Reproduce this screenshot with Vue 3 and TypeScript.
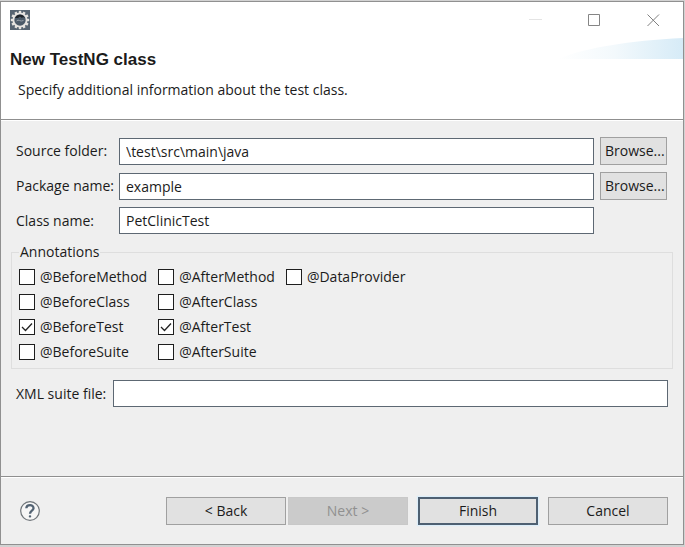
<script setup lang="ts">
import { reactive, ref } from 'vue'

interface Annotation {
  id: string
  label: string
  checked: boolean
}

const sourceFolder = ref('\\test\\src\\main\\java')
const packageName = ref('example')
const className = ref('PetClinicTest')
const suiteFile = ref('')

const columns = reactive<Annotation[][]>([
  [
    { id: 'before-method', label: '@BeforeMethod', checked: false },
    { id: 'before-class', label: '@BeforeClass', checked: false },
    { id: 'before-test', label: '@BeforeTest', checked: true },
    { id: 'before-suite', label: '@BeforeSuite', checked: false },
  ],
  [
    { id: 'after-method', label: '@AfterMethod', checked: false },
    { id: 'after-class', label: '@AfterClass', checked: false },
    { id: 'after-test', label: '@AfterTest', checked: true },
    { id: 'after-suite', label: '@AfterSuite', checked: false },
  ],
  [{ id: 'data-provider', label: '@DataProvider', checked: false }],
])

const gearAngles: number[] = [0, 30, 60, 90, 120, 150, 180, 210, 240, 270, 300, 330]
</script>

<template>
  <main class="dialog">
    <header class="banner">
      <svg class="swoosh" viewBox="0 0 125 22" aria-hidden="true">
        <defs>
          <linearGradient id="swoosh-fill" x1="0" y1="0" x2="1" y2="0">
            <stop offset="0" stop-color="#ffffff" />
            <stop offset="0.45" stop-color="#f3f9fc" />
            <stop offset="1" stop-color="#d6ebf7" />
          </linearGradient>
        </defs>
        <path d="M0 21C30 9 70 3 125 0V21Z" fill="url(#swoosh-fill)" />
      </svg>
      <div class="titlebar">
        <svg class="app-icon" viewBox="0 0 20 20" aria-hidden="true">
          <rect width="20" height="20" fill="#566471" />
          <rect
            v-for="angle in gearAngles"
            :key="angle"
            x="8.8"
            y="0.8"
            width="2.4"
            height="4"
            fill="#e6e4e0"
            :transform="`rotate(${angle} 10 10)`"
          />
          <circle cx="10" cy="10" r="7.6" fill="#e6e4e0" />
          <circle cx="10" cy="10" r="5.7" fill="#4b5a68" />
          <path d="M5 8A5.4 5.4 0 0 1 15 8L13 7L12 8L10 6.500L8 8Z" fill="#1d2329" />
          <path d="M6.500 11Q8 9.500 9.500 10.500T13.500 10.500" fill="none" stroke="#97a0a8" />
        </svg>
        <div class="window-controls">
          <button type="button" aria-label="Minimize">
            <svg viewBox="0 0 13 13"><path d="M0 5.5H13" stroke="#e4e4e4" /></svg>
          </button>
          <button type="button" aria-label="Maximize">
            <svg viewBox="0 0 13 13"><path d="M0.5 0.5H11.5V11.5H0.5Z" stroke="#858585" /></svg>
          </button>
          <button type="button" aria-label="Close">
            <svg viewBox="0 0 13 13"><path d="M0.500 0.500L12 12M12 0.500L0.500 12" stroke="#808080" /></svg>
          </button>
        </div>
      </div>
      <h1>New TestNG class</h1>
      <p>Specify additional information about the test class.</p>
    </header>

    <form class="content" @submit.prevent>
      <div class="fields">
        <div class="field">
          <label for="source">Source folder:</label>
          <input id="source" v-model="sourceFolder" type="text" />
          <button type="button" class="button">Browse...</button>
        </div>
        <div class="field">
          <label for="package">Package name:</label>
          <input id="package" v-model="packageName" type="text" />
          <button type="button" class="button">Browse...</button>
        </div>
        <div class="field">
          <label for="class">Class name:</label>
          <input id="class" v-model="className" type="text" />
        </div>
      </div>

      <fieldset>
        <legend>Annotations</legend>
        <div class="columns">
          <div v-for="(column, index) in columns" :key="index" class="column">
            <label v-for="item in column" :key="item.id" class="check" :for="item.id">
              <span class="box">
                <input :id="item.id" v-model="item.checked" type="checkbox" />
                <svg v-if="item.checked" viewBox="0 0 16 16" aria-hidden="true">
                  <path d="M3 8L6.500 11.500L13 4.500" />
                </svg>
              </span>
              {{ item.label }}
            </label>
          </div>
        </div>
      </fieldset>

      <div class="suite">
        <label for="suite">XML suite file:</label>
        <input id="suite" v-model="suiteFile" type="text" />
      </div>
    </form>

    <footer>
      <button type="button" class="help" aria-label="Help">
        <svg viewBox="0 0 20 20">
          <circle cx="10" cy="10" r="9.3" fill="#f6f6f6" stroke="#6e7479" stroke-width="1.2" />
          <path
            d="M6.300 7.300C6.500 3 13.600 3 13.500 7.200C13.400 9.600 10 9.700 10 12.700"
            fill="none"
            stroke="#536373"
            stroke-width="2.3"
          />
          <rect x="8.800" y="14.200" width="2.400" height="2.400" rx="1" fill="#536373" />
        </svg>
      </button>
      <div class="actions">
        <div class="steps">
          <button type="button" class="button">&lt; Back</button>
          <button type="button" class="button" disabled>Next &gt;</button>
        </div>
        <button type="button" class="button primary">Finish</button>
        <button type="button" class="button">Cancel</button>
      </div>
    </footer>
  </main>
</template>

<style>
body {
  margin: 0;
  background: #d2d2d2;
}
</style>

<style scoped>
* {
  box-sizing: border-box;
}

.dialog {
  display: flex;
  flex-direction: column;
  min-height: calc(100vh - 3px);
  margin: 1px 1px 2px 0;
  border: 1px solid #909090;
  background: #efefef;
  color: #1b1b1b;
  font-family: "Open Sans", "Noto Sans", sans-serif;
  font-size: 14px;
  line-height: 20px;
}

.banner {
  position: relative;
  height: 118px;
  border-bottom: 1px solid #8f8f8f;
  background: #fff;
}

.swoosh {
  position: absolute;
  top: 36px;
  right: 0;
  width: 125px;
  height: 22px;
}

.titlebar {
  display: flex;
  align-items: center;
  justify-content: space-between;
  height: 36px;
  padding-left: 9px;
}

.app-icon {
  width: 20px;
  height: 20px;
}

.window-controls {
  display: flex;
}

.window-controls button {
  display: grid;
  place-items: center;
  width: 59px;
  height: 36px;
  padding: 0;
  border: 0;
  background: none;
}

.window-controls svg {
  width: 13px;
  height: 13px;
  fill: none;
}

h1 {
  margin: 12px 9px 0;
  font-family: "Liberation Sans", Arial, sans-serif;
  font-size: 17px;
  font-weight: 700;
  line-height: 20px;
}

p {
  margin: 10px 17px 0;
}

.content {
  flex: 1;
  padding: 16px 10px 0;
  border-top: 1px solid #fff;
}

.fields {
  display: flex;
  flex-direction: column;
  gap: 7px;
  padding: 0 6px 0 5px;
}

.field {
  display: grid;
  grid-template-columns: 97px 1fr 67px;
  align-items: center;
  column-gap: 6px;
}

input[type="text"] {
  width: 100%;
  min-width: 0;
  height: 27px;
  padding: 0 6px;
  border: 1px solid #5d6873;
  border-radius: 0;
  background: #fff;
  color: inherit;
  font: inherit;
}

label {
  white-space: nowrap;
}

.button {
  height: 28px;
  padding: 0 4px;
  border: 1px solid #a0a0a0;
  border-radius: 0;
  background: #e1e1e1;
  color: inherit;
  font: inherit;
}

fieldset {
  margin: 8px 0 0;
  padding: 0 7px 6px;
  border: 1px solid #dedede;
}

legend {
  padding: 0 1px;
}

.columns {
  display: flex;
  gap: 11px;
  padding-top: 5px;
}

.column {
  display: flex;
  flex-direction: column;
  gap: 5px;
}

.check {
  display: flex;
  align-items: center;
  gap: 5px;
}

.box {
  display: grid;
  width: 16px;
  height: 16px;
}

.box > * {
  grid-area: 1 / 1;
}

.box input {
  appearance: none;
  width: 16px;
  height: 16px;
  margin: 0;
  border: 1px solid #1e1e1e;
  background: #fff;
}

.box svg {
  fill: none;
  stroke: #222;
  stroke-width: 1.3px;
  pointer-events: none;
}

.suite {
  display: grid;
  grid-template-columns: 93px 1fr;
  align-items: center;
  column-gap: 4px;
  padding: 11px 5px 0;
}

footer {
  display: flex;
  align-items: center;
  justify-content: space-between;
  height: 68px;
  padding: 0 15px 0 19px;
  border-top: 1px solid #8f8f8f;
  box-shadow: inset 0 1px #fff;
}

.help {
  width: 20px;
  height: 20px;
  padding: 0;
  border: 0;
  background: none;
}

.help svg {
  display: block;
}

.actions {
  display: flex;
  gap: 10px;
}

.steps {
  display: flex;
  gap: 2px;
}

.actions .button {
  width: 120px;
}

.button:disabled {
  border-color: #c8c8c8;
  background: #cbcbcb;
  color: #909090;
}

.button.primary {
  border: 2px solid #4e6072;
  box-shadow: 0 0 1px 1px #dceefa;
}
</style>
